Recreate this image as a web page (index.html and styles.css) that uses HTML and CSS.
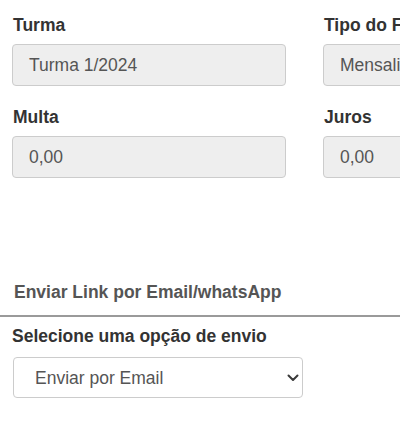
FILE: index.html
```html
<!DOCTYPE html>
<html lang="pt-BR">
<head>
<meta charset="utf-8">
<title>Pagamento</title>
<link rel="stylesheet" href="styles.css">
</head>
<body>
<div class="page">
  <div class="fields">
    <div class="field">
      <label class="label">Turma</label>
      <div class="input">Turma 1/2024</div>
    </div>
    <div class="field">
      <label class="label">Tipo do Financeiro</label>
      <div class="input">Mensalidade</div>
    </div>
    <div class="field">
      <label class="label">Multa</label>
      <div class="input">0,00</div>
    </div>
    <div class="field">
      <label class="label">Juros</label>
      <div class="input">0,00</div>
    </div>
  </div>

  <div class="send-head">
    <h4 class="send-title">Enviar Link por Email/whatsApp</h4>
  </div>
  <div class="divider"></div>

  <div class="send-body">
    <label class="label">Selecione uma opção de envio</label>
    <div class="select-wrap">
      <select class="select">
        <option>Enviar por Email</option>
        <option>Enviar por WhatsApp</option>
      </select>
      <svg class="chevron" width="12" height="8" viewBox="0 0 12 8" aria-hidden="true">
        <path d="M1.5 1.5 L6 6 L10.5 1.5" fill="none" stroke="#3a3a3a" stroke-width="2" stroke-linecap="round" stroke-linejoin="round"/>
      </svg>
    </div>
  </div>
</div>
</body>
</html>
```

FILE: styles.css
```css
html, body {
  margin: 0;
  padding: 0;
  overflow: hidden;
  background: #ffffff;
}

body {
  font-family: "Liberation Sans", Arial, sans-serif;
  font-size: 17.5px;
  color: #333333;
}

.page {
  width: 400px;
}

.fields {
  display: grid;
  grid-template-columns: 274px 274px;
  column-gap: 37px;
  row-gap: 21px;
  padding: 15px 0 0 12px;
  width: 600px;
}

.field {
  display: flex;
  flex-direction: column;
  gap: 8px;
}

.label {
  display: block;
  font-weight: bold;
  line-height: 21px;
  color: #333333;
  white-space: nowrap;
  padding-left: 1px;
}

.input {
  box-sizing: border-box;
  height: 42px;
  border: 1px solid #cccccc;
  border-radius: 4px;
  background: #eeeeee;
  color: #555555;
  padding: 0 16px;
  display: flex;
  align-items: center;
  white-space: nowrap;
  overflow: hidden;
}

.send-head {
  padding: 104px 0 12px 14px;
}

.send-title {
  margin: 0;
  font-size: 17.5px;
  font-weight: bold;
  line-height: 21px;
  color: #555555;
}

.divider {
  height: 2px;
  background: #9a9a9a;
}

.send-body {
  padding: 9px 0 0 11px;
  display: flex;
  flex-direction: column;
  gap: 10px;
}

.select-wrap {
  position: relative;
  width: 290px;
  margin-left: 2px;
}

.select {
  -webkit-appearance: none;
  appearance: none;
  box-sizing: border-box;
  width: 290px;
  height: 41px;
  border: 1px solid #cccccc;
  border-radius: 4px;
  background: #ffffff;
  color: #555555;
  font-family: "Liberation Sans", Arial, sans-serif;
  font-size: 17.5px;
  padding: 0 16px 0 21px;
  margin: 0;
}

.chevron {
  position: absolute;
  right: 4px;
  top: 17px;
}
```
